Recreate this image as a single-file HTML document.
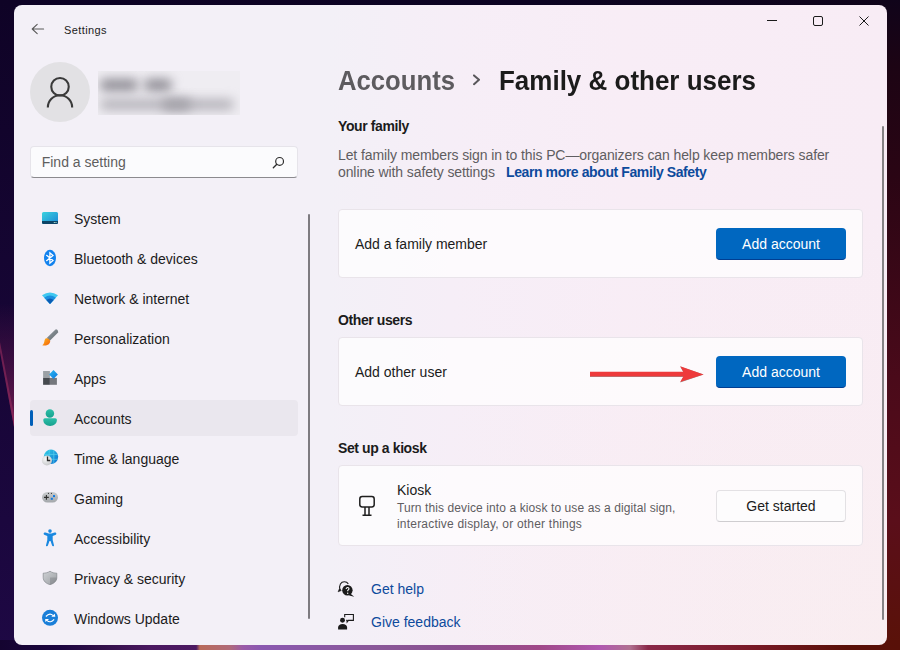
<!DOCTYPE html>
<html>
<head>
<meta charset="utf-8">
<style>
*{margin:0;padding:0;box-sizing:border-box}
html,body{width:900px;height:650px;overflow:hidden}
body{position:relative;font-family:"Liberation Sans",sans-serif;
background:
 linear-gradient(180deg,rgba(0,0,0,0) 0%,rgba(0,0,0,0) 100%),
 linear-gradient(90deg,#12042c 0%,#150630 40%,#1a0826 80%,#1c0a1c 100%);
}
#wp{position:absolute;left:0;top:0;width:900px;height:650px}
.win{position:absolute;left:14px;top:5px;width:873px;height:640px;border-radius:8px;
background:radial-gradient(ellipse 60% 70% at 100% 100%,rgba(250,238,234,0.45) 0%,rgba(250,238,234,0) 100%),linear-gradient(90deg,#f3f0f7 0%,#f3f0f7 36%,#f6eef7 50%,#f8edf6 70%,#f8ecf5 100%);overflow:hidden}
.abs{position:absolute;white-space:nowrap}
.t14{font-size:14px;line-height:14px;color:#1b1b1b}
.b14{font-size:14px;line-height:14px;font-weight:700;letter-spacing:-0.4px;color:#1b1b1b}
.nav{position:absolute;left:60px;font-size:14px;line-height:14px;color:#1b1b1b;white-space:nowrap}
.card{position:absolute;left:324px;width:525px;background:rgba(255,255,255,0.72);border:1px solid #e9e4ea;border-radius:4px}
.btn{position:absolute;left:702px;width:130px;height:32px;border-radius:4px;font-size:14px;line-height:14px;text-align:center}
.pri{background:#0067c0;border-bottom:1px solid #003e92;color:#fff}
.sec{background:#fdfcfd;border:1px solid #e3e1e4;border-bottom-color:#cfcdd0;color:#1b1b1b}
.ico{position:absolute}
</style>
</head>
<body>
<svg id="wp" width="900" height="650" viewBox="0 0 900 650">
 <defs>
  <linearGradient id="rside" x1="0" y1="0" x2="0" y2="1">
   <stop offset="0" stop-color="#10041a"/>
   <stop offset="0.1" stop-color="#1c0414"/>
   <stop offset="0.27" stop-color="#2a0514"/>
   <stop offset="0.58" stop-color="#4a0a1a"/>
   <stop offset="0.8" stop-color="#5a0e1a"/>
   <stop offset="1" stop-color="#5a1208"/>
  </linearGradient>
  <linearGradient id="lside" x1="0" y1="0" x2="0" y2="1">
   <stop offset="0" stop-color="#0f0326"/>
   <stop offset="1" stop-color="#1e0844"/>
  </linearGradient>
  <linearGradient id="bot" x1="0" y1="0" x2="1" y2="0">
   <stop offset="0" stop-color="#140430"/>
   <stop offset="0.067" stop-color="#1c0640"/>
   <stop offset="0.11" stop-color="#301048"/>
   <stop offset="0.167" stop-color="#4a1860"/>
   <stop offset="0.218" stop-color="#4c1a62"/>
   <stop offset="0.222" stop-color="#b86a5a"/>
   <stop offset="0.255" stop-color="#b06a78"/>
   <stop offset="0.27" stop-color="#9a5aa8"/>
   <stop offset="0.29" stop-color="#8a58b0"/>
   <stop offset="0.42" stop-color="#8a5898"/>
   <stop offset="0.5" stop-color="#8a5090"/>
   <stop offset="0.6" stop-color="#a04888"/>
   <stop offset="0.667" stop-color="#b058b0"/>
   <stop offset="0.7" stop-color="#b07090"/>
   <stop offset="0.72" stop-color="#8a2848"/>
   <stop offset="0.83" stop-color="#7a1a28"/>
   <stop offset="0.94" stop-color="#5a1008"/>
   <stop offset="1" stop-color="#581008"/>
  </linearGradient>
  <linearGradient id="streak" x1="0" y1="0" x2="0" y2="1">
   <stop offset="0" stop-color="#0f0326" stop-opacity="0"/>
   <stop offset="0.5" stop-color="#8a2a6a" stop-opacity="0.8"/>
   <stop offset="1" stop-color="#0f0326" stop-opacity="0"/>
  </linearGradient>
 </defs>
 <linearGradient id="top" x1="0" y1="0" x2="1" y2="0"><stop offset="0" stop-color="#0d0326"/><stop offset="0.6" stop-color="#0c0322"/><stop offset="1" stop-color="#10041a"/></linearGradient>
 <rect x="0" y="0" width="900" height="650" fill="url(#top)"/>
 <rect x="0" y="0" width="20" height="650" fill="url(#lside)"/>
 <linearGradient id="wedge" x1="0" y1="0" x2="0" y2="1"><stop offset="0.3" stop-color="#5a1448" stop-opacity="0"/><stop offset="0.65" stop-color="#5a1448" stop-opacity="0.55"/><stop offset="1" stop-color="#7a2050" stop-opacity="0.9"/></linearGradient>
 <path d="M0 250 L14 250 L14 427 L0 352 Z" fill="url(#wedge)"/>
 <path d="M0 352 L14 427 L14 415 L0 342 Z" fill="#9a2e60" opacity="0.55"/>
 <rect x="880" y="0" width="20" height="650" fill="url(#rside)"/>
 <rect x="0" y="640" width="900" height="10" fill="url(#bot)"/>
</svg>

<div class="win">
 <!-- title bar -->
 <svg class="ico" style="left:17px;top:18px" width="14" height="12" viewBox="0 0 14 12">
  <path d="M6.2 1.4 L1.2 6 L6.2 10.6 M1.2 6 H12.6" fill="none" stroke="#5a5a5a" stroke-width="1.1" stroke-linecap="round" stroke-linejoin="round"/>
 </svg>
 <div class="abs" style="left:50px;top:20.3px;font-size:11px;line-height:11px;letter-spacing:0.4px;color:#1b1b1b">Settings</div>

 <svg class="ico" style="left:752px;top:10px" width="12" height="12" viewBox="0 0 12 12"><path d="M1 5.5 H11" stroke="#1b1b1b" stroke-width="1"/></svg>
 <svg class="ico" style="left:798px;top:10px" width="12" height="12" viewBox="0 0 12 12"><rect x="1.5" y="1.5" width="9" height="9" rx="1.5" fill="none" stroke="#1b1b1b" stroke-width="1"/></svg>
 <svg class="ico" style="left:844px;top:10px" width="12" height="12" viewBox="0 0 12 12"><path d="M1.5 1.5 L10.5 10.5 M10.5 1.5 L1.5 10.5" stroke="#1b1b1b" stroke-width="1"/></svg>

 <!-- profile -->
 <div class="abs" style="left:16px;top:56.5px;width:60px;height:60px;border-radius:50%;background:#e2e1e4"></div>
 <svg class="ico" style="left:16px;top:56.5px" width="60" height="60" viewBox="0 0 60 60">
  <circle cx="30" cy="24.8" r="8.75" fill="none" stroke="#3a3a3a" stroke-width="2.1"/>
  <path d="M17.85 45.4 A12.15 12.15 0 0 1 42.15 45.4" fill="none" stroke="#3a3a3a" stroke-width="2.1"/>
 </svg>
 <div class="abs" style="left:84px;top:66px;width:142px;height:44px;overflow:hidden;background:#efedf2">
  <div class="abs" style="left:2px;top:8px;width:38px;height:12px;border-radius:5px;background:#8e8c94;filter:blur(5.5px)"></div>
  <div class="abs" style="left:46px;top:8px;width:28px;height:12px;border-radius:5px;background:#8e8c94;filter:blur(5.5px)"></div>
  <div class="abs" style="left:2px;top:28px;width:134px;height:11px;border-radius:5px;background:#b4b2b9;filter:blur(5.5px)"></div>
  <div class="abs" style="left:64px;top:28px;width:29px;height:11px;border-radius:5px;background:#a09ea5;filter:blur(5.5px)"></div>
 </div>

 <!-- search -->
 <div class="abs" style="left:16px;top:141px;width:268px;height:32px;border-radius:4px;background:#fbfbfd;border:1px solid #e6e4ea;border-bottom:1px solid #8b8a8e"></div>
 <div class="abs" style="left:27.7px;top:150px;font-size:14px;line-height:14px;color:#5e5e5e">Find a setting</div>
 <svg class="ico" style="left:258px;top:151px" width="13" height="13" viewBox="0 0 13 13">
  <circle cx="7.6" cy="5.4" r="3.9" fill="none" stroke="#2b2b2b" stroke-width="1.2"/>
  <path d="M4.8 8.2 L1.3 11.7" stroke="#2b2b2b" stroke-width="1.3" stroke-linecap="round"/>
 </svg>

 <!-- nav -->
 <div class="abs" style="left:16px;top:395px;width:268px;height:36px;border-radius:4px;background:#eae7ee"></div>
 <div class="abs" style="left:16px;top:404.7px;width:3px;height:16.3px;border-radius:1.5px;background:#005fb8"></div>

 <div class="nav" style="top:206.5px">System</div>
 <div class="nav" style="top:246.5px">Bluetooth &amp; devices</div>
 <div class="nav" style="top:286.5px">Network &amp; internet</div>
 <div class="nav" style="top:326.5px">Personalization</div>
 <div class="nav" style="top:366.5px">Apps</div>
 <div class="nav" style="top:406.5px">Accounts</div>
 <div class="nav" style="top:446.5px">Time &amp; language</div>
 <div class="nav" style="top:486.5px">Gaming</div>
 <div class="nav" style="top:526.5px">Accessibility</div>
 <div class="nav" style="top:566.5px">Privacy &amp; security</div>
 <div class="nav" style="top:606.5px">Windows Update</div>

 <!-- nav scrollbar -->
 <div class="abs" style="left:294px;top:209px;width:2px;height:405px;border-radius:1px;background:#7d7b80"></div>
 <!-- content scrollbar -->
 <div class="abs" style="left:868px;top:121px;width:2px;height:494px;border-radius:1px;background:#858285"></div>

 <!-- header -->
 <div class="abs" style="left:324px;top:62.2px;font-size:28px;line-height:28px;font-weight:700;color:#5d5b5f;transform-origin:0 0;transform:scaleX(0.917)">Accounts</div>
 <svg class="ico" style="left:459px;top:69px" width="9" height="12" viewBox="0 0 9 12"><path d="M1 1.4 L6 5.8 L1 10.2" fill="none" stroke="#59575b" stroke-width="2" stroke-linecap="round" stroke-linejoin="round"/></svg>
 <div class="abs" style="left:485px;top:62.2px;font-size:28px;line-height:28px;font-weight:700;color:#1b1b1b;transform-origin:0 0;transform:scaleX(0.928)">Family &amp; other users</div>

 <!-- your family -->
 <div class="abs b14" style="left:324px;top:114px">Your family</div>
 <div class="abs t14" style="left:324px;top:142.5px;color:#5f5d61;letter-spacing:-0.1px">Let family members sign in to this PC—organizers can help keep members safer</div>
 <div class="abs t14" style="left:324px;top:160px;color:#5f5d61;letter-spacing:-0.1px">online with safety settings</div>
 <div class="abs b14" style="left:492px;top:160px;color:#0d4a9c">Learn more about Family Safety</div>

 <div class="card" style="top:204px;height:69px"></div>
 <div class="abs t14" style="left:341px;top:232px">Add a family member</div>
 <div class="btn pri" style="top:223px;padding-top:8.75px">Add account</div>

 <div class="abs b14" style="left:324px;top:308px">Other users</div>
 <div class="card" style="top:332px;height:69px"></div>
 <div class="abs t14" style="left:341px;top:360px">Add other user</div>
 <div class="btn pri" style="top:351px;padding-top:8.75px">Add account</div>

 <!-- red arrow -->
 <svg class="ico" style="left:570px;top:355px" width="125" height="30" viewBox="0 0 125 30">
  <path d="M6 12.3 H99.3 L96.2 6.4 L119.6 14.6 L96.2 22.4 L99.3 17 H6 Z" fill="#3c4a4a" opacity="0.55"/>
  <path d="M6 11.8 H99.3 L96.2 6.2 L119.6 14.4 L96.2 22 L99.3 16.5 H6 Z" fill="#ee3a3b"/>
 </svg>

 <div class="abs b14" style="left:324px;top:436px">Set up a kiosk</div>
 <div class="card" style="top:460px;height:81px"></div>
 <svg class="ico" style="left:343px;top:489px" width="20" height="24" viewBox="0 0 20 24">
  <rect x="2.8" y="2.6" width="14.4" height="10.4" rx="2.4" fill="none" stroke="#1f1f1f" stroke-width="1.5"/>
  <path d="M8 13 V21 M12 13 V21 M5.5 21.2 H14.5" fill="none" stroke="#1f1f1f" stroke-width="1.5"/>
 </svg>
 <div class="abs t14" style="left:383px;top:478px">Kiosk</div>
 <div class="abs" style="left:383px;top:496.8px;font-size:12px;line-height:12px;color:#5f5d61;letter-spacing:0.1px">Turn this device into a kiosk to use as a digital sign,</div>
 <div class="abs" style="left:383px;top:513px;font-size:12px;line-height:12px;color:#5f5d61;letter-spacing:0.2px">interactive display, or other things</div>
 <div class="btn sec" style="top:485px;padding-top:8px">Get started</div>

 <!-- links -->
 <svg class="ico" style="left:323px;top:575px" width="18" height="18" viewBox="0 0 18 18">
  <path d="M11.3 3.9 C9.6 1.3 5.3 0.9 3.4 4 C2.4 5.7 2.4 8 3.1 10.2" fill="none" stroke="#1b1b1b" stroke-width="1.1"/>
  <path d="M1.1 11.8 L2.4 8.8 L4.3 10.5 Z" fill="#1b1b1b" stroke="#1b1b1b" stroke-width="0.6" stroke-linejoin="round"/>
  <circle cx="10.4" cy="10.3" r="5.2" fill="#1b1b1b"/>
  <path d="M13 13.2 L17.2 16.7 L12.2 15.4 Z" fill="#1b1b1b"/>
  <path d="M9.2 8.9 C9.2 7.9 9.9 7.5 10.6 7.5 C11.4 7.5 12 8 12 8.7 C12 9.6 11 9.8 10.7 10.5 V11.3" fill="none" stroke="#fff" stroke-width="1.1"/>
  <circle cx="10.7" cy="13.2" r="0.7" fill="#fff"/>
 </svg>
 <div class="abs t14" style="left:357px;top:577.25px;color:#0d4a9c">Get help</div>
 <svg class="ico" style="left:323px;top:608px" width="18" height="18" viewBox="0 0 18 18">
  <path d="M7.7 4.3 V1.5 H16.4 V7.4 H11.4 L10.1 9.1 L10 7.4 H9.2" fill="none" stroke="#1b1b1b" stroke-width="1.1"/>
  <circle cx="5.5" cy="7.3" r="2.45" fill="#1b1b1b"/>
  <path d="M1.1 16.6 V14.6 C1.1 12.4 3.1 11 5.6 11 C8.1 11 10.1 12.4 10.1 14.6 V16.6 Z" fill="#1b1b1b"/>
 </svg>
 <div class="abs t14" style="left:357px;top:610.25px;color:#0d4a9c">Give feedback</div>

 <!-- nav icons -->
 <svg class="ico" style="left:27px;top:206px" width="18" height="14" viewBox="0 0 18 14">
  <defs><linearGradient id="sg" x1="0" y1="0" x2="1" y2="1"><stop offset="0" stop-color="#3ad2de"/><stop offset="1" stop-color="#1a86d6"/></linearGradient></defs>
  <rect x="1" y="1" width="16" height="12" rx="1.5" fill="url(#sg)"/>
  <path d="M1 10 H17 V11.5 A1.5 1.5 0 0 1 15.5 13 H2.5 A1.5 1.5 0 0 1 1 11.5 Z" fill="#0c4466"/>
  <circle cx="13.3" cy="11.5" r="0.6" fill="#cfe"/><circle cx="15" cy="11.5" r="0.6" fill="#cfe"/>
 </svg>
 <svg class="ico" style="left:29px;top:244px" width="14" height="18" viewBox="0 0 14 18">
  <ellipse cx="7" cy="9" rx="6" ry="8.2" fill="#1282ee"/>
  <path d="M3.6 6.3 L10 11.6 L6.9 14.2 V3.8 L10 6.4 L3.6 11.7" fill="none" stroke="#fff" stroke-width="1.25" stroke-linejoin="miter" stroke-linecap="round"/>
 </svg>
 <svg class="ico" style="left:27px;top:287px" width="18" height="13" viewBox="0 0 18 13">
  <path d="M1 3.3 Q9 -2.2 17 3.3 L9 12 Z" fill="#40c8f0"/>
  <path d="M3.2 5.7 Q9 1.3 14.8 5.7 L9 12 Z" fill="#1c8fe0"/>
  <path d="M5.4 8.1 Q9 4.9 12.6 8.1 L9 12 Z" fill="#0a5cb4"/>
 </svg>
 <svg class="ico" style="left:27px;top:324px" width="18" height="18" viewBox="0 0 18 18">
  <defs><linearGradient id="pb" x1="0" y1="0" x2="1" y2="1"><stop offset="0" stop-color="#9aa2a8"/><stop offset="1" stop-color="#5c646a"/></linearGradient>
  <linearGradient id="po" x1="0" y1="0" x2="1" y2="1"><stop offset="0" stop-color="#ffb81a"/><stop offset="1" stop-color="#f2600c"/></linearGradient></defs>
  <path d="M14.5 0.4 Q16.8 -0.3 17.3 3.2 L8.6 11.9 L5.7 9.1 Z" fill="url(#pb)"/>
  <path d="M5.2 9.3 C6.8 9 8.6 10.2 9.2 12 C9.2 14.6 7 16.4 4 16.5 C3 16.5 2 16.4 1.2 16.2 C2.8 15.3 3 13.8 3.4 12.2 C3.7 10.6 4.3 9.6 5.2 9.3 Z" fill="url(#po)"/>
 </svg>
 <svg class="ico" style="left:27px;top:364px" width="18" height="18" viewBox="0 0 18 18">
  <defs><linearGradient id="ad" x1="0" y1="0" x2="1" y2="1"><stop offset="0" stop-color="#2bb8f0"/><stop offset="1" stop-color="#0a78e0"/></linearGradient></defs>
  <rect x="2.1" y="2" width="6.8" height="6.9" fill="#9ca1a6"/>
  <rect x="2.1" y="8.9" width="6.8" height="6.9" fill="#45494e"/>
  <rect x="8.9" y="8.9" width="7" height="6.9" fill="#75787d"/>
  <path d="M12.5 1.1 L16.9 5.5 L12.5 9.9 L8.1 5.5 Z" fill="url(#ad)"/>
 </svg>
 <!-- accounts -->
 <svg class="ico" style="left:27px;top:403px" width="18" height="18" viewBox="0 0 18 18">
  <defs><linearGradient id="ac" x1="0" y1="0" x2="0" y2="1"><stop offset="0" stop-color="#2cbfa8"/><stop offset="1" stop-color="#17a08e"/></linearGradient></defs>
  <circle cx="8.9" cy="5.6" r="4.25" fill="url(#ac)"/>
  <path d="M3.8 10.3 H14.2 C15.2 10.3 15.9 11 15.9 12 C15.9 15.5 12.8 17.9 9.1 17.9 C5.4 17.9 2.3 15.5 2.3 12 C2.3 11 3 10.3 3.8 10.3 Z" fill="url(#ac)"/>
 </svg>
 <svg class="ico" style="left:27px;top:443px" width="18" height="18" viewBox="0 0 18 18">
  <defs><linearGradient id="gl" x1="0" y1="0" x2="1" y2="1"><stop offset="0" stop-color="#34d0e6"/><stop offset="1" stop-color="#0a6ed0"/></linearGradient>
  <radialGradient id="cl" cx="0.4" cy="0.35" r="0.7"><stop offset="0" stop-color="#fafafa"/><stop offset="1" stop-color="#c4c6c8"/></radialGradient></defs>
  <clipPath id="gc"><circle cx="10" cy="8.8" r="7.2"/></clipPath>
  <circle cx="10" cy="8.8" r="7.2" fill="url(#gl)"/>
  <path d="M2 6.4 H18 M2 11.3 H18 M8.2 1 V17 M12.8 1 V17" stroke="#62dcf2" stroke-width="0.8" opacity="0.75" clip-path="url(#gc)"/>
  <circle cx="5.9" cy="12.5" r="5" fill="url(#cl)"/>
  <path d="M6.5 8.6 V12.5 H9.2" fill="none" stroke="#2a2a2a" stroke-width="1.3"/>
 </svg>
 <svg class="ico" style="left:27px;top:485px" width="18" height="14" viewBox="0 0 18 14">
  <defs><linearGradient id="gm" x1="0" y1="0" x2="0" y2="1"><stop offset="0" stop-color="#c8cbce"/><stop offset="1" stop-color="#a3a7ab"/></linearGradient></defs>
  <rect x="1" y="2" width="16" height="10.6" rx="5.3" fill="url(#gm)"/>
  <path d="M3 7.4 H7.8 M5.4 5 V9.8" stroke="#2e2e2e" stroke-width="1.1"/>
  <rect x="12" y="5.1" width="2" height="2" fill="#0e78e0"/>
  <rect x="9.8" y="7.8" width="2" height="2" fill="#0e78e0"/>
  <circle cx="7.4" cy="3.4" r="0.55" fill="#333"/><circle cx="10.4" cy="3.4" r="0.55" fill="#333"/>
 </svg>
 <svg class="ico" style="left:27px;top:524px" width="18" height="18" viewBox="0 0 18 18">
  <circle cx="9" cy="2.1" r="1.8" fill="#1a88e0"/>
  <path d="M3.6 3.6 C2.7 3.9 2.4 4.8 2.9 5.5 C3.1 5.8 3.4 6 3.8 6.1 L6.3 6.9 V11 L5 16.2 C4.9 16.8 5.3 17.2 5.9 17.2 C6.4 17.2 6.8 16.9 6.9 16.4 L8.5 11.9 H9.5 L11.1 16.4 C11.2 16.9 11.6 17.2 12.1 17.2 C12.7 17.2 13.1 16.8 13 16.2 L11.7 11 V6.9 L14.2 6.1 C14.6 6 14.9 5.8 15.1 5.5 C15.6 4.8 15.3 3.9 14.4 3.6 C14.1 3.5 13.8 3.5 13.5 3.6 L10.4 4.6 H7.6 L4.5 3.6 C4.2 3.5 3.9 3.5 3.6 3.6 Z" fill="#1a88e0"/>
 </svg>
 <svg class="ico" style="left:27px;top:564px" width="18" height="18" viewBox="0 0 18 18">
  <defs><linearGradient id="sh" x1="0" y1="0" x2="1" y2="1"><stop offset="0" stop-color="#cfd2d5"/><stop offset="1" stop-color="#9a9ea2"/></linearGradient></defs>
  <path d="M9 2.2 C7 3.6 4.5 4.2 2.2 4.2 V8.5 C2.2 12 5 14.6 9 15.6 C13 14.6 15.8 12 15.8 8.5 V4.2 C13.5 4.2 11 3.6 9 2.2 Z" fill="url(#sh)" stroke="#84888c" stroke-width="0.7"/>
  <path d="M9 8.5 V15.8 C13 14.6 15.9 12 15.9 8.5 H9 Z" fill="#6d7175" opacity="0.35"/>
 </svg>
 <svg class="ico" style="left:27px;top:604px" width="18" height="18" viewBox="0 0 18 18">
  <circle cx="9" cy="8.8" r="8" fill="#1a7fd8"/>
  <path d="M4.9 7.5 Q8.6 3.4 12.2 6.6" fill="none" stroke="#fff" stroke-width="1.2"/>
  <path d="M13.8 4.8 L14.3 7.8 L10.3 7.8 Z" fill="#fff"/>
  <path d="M13.1 10.3 Q9.6 14.6 5.8 11.4" fill="none" stroke="#fff" stroke-width="1.2"/>
  <path d="M4.2 10 L4.4 13 L8.1 10 Z" fill="#fff"/>
 </svg>
</div>
</body>
</html>
